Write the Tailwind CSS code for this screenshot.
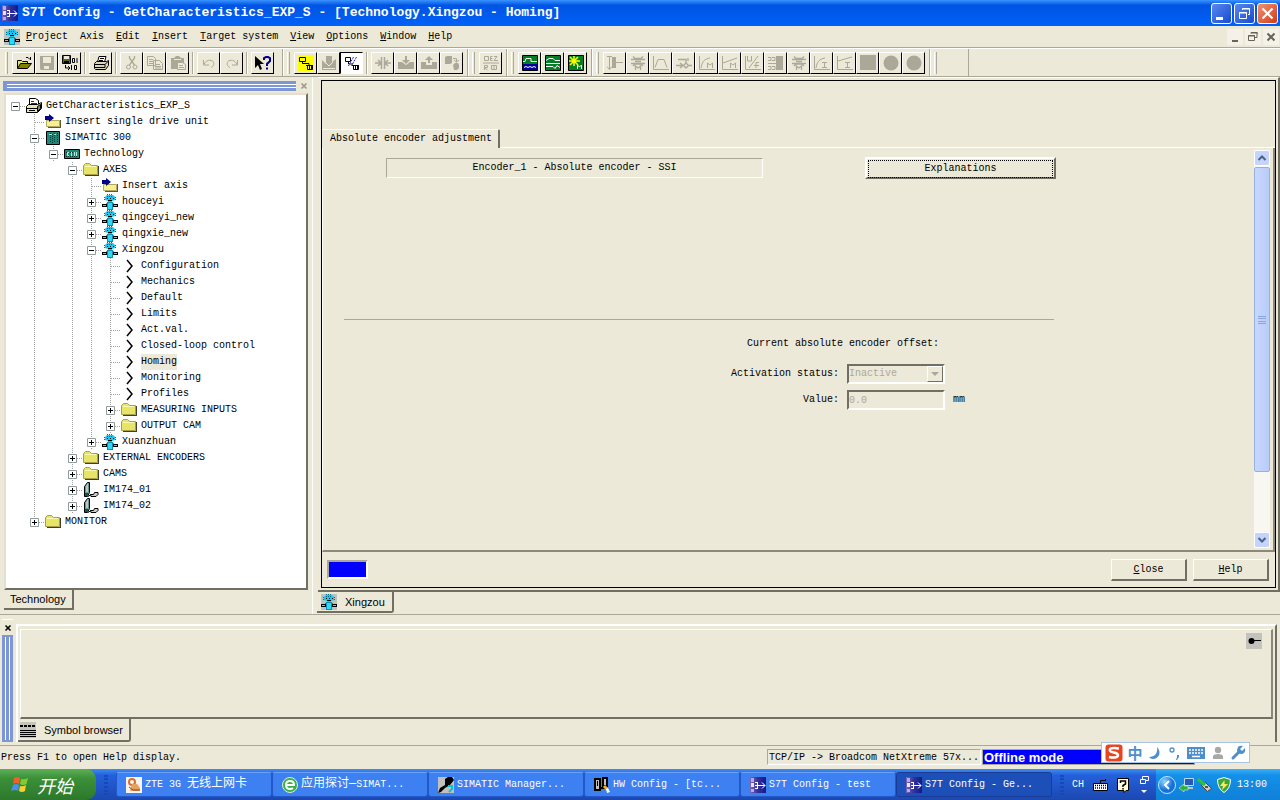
<!DOCTYPE html>
<html lang="en">
<head>
    <meta charset="UTF-8">
    <meta name="viewport" content="width=device-width, initial-scale=1.0">
    <title>S7T Config</title>
    <script src="https://cdn.jsdelivr.net/npm/@tailwindcss/browser@4"></script>
</head>
<body class="h-screen flex flex-col overflow-hidden bg-[#ece9d8] text-black text-[10px] leading-4 font-['Liberation_Mono','Noto_Sans_CJK_SC',monospace]">
    <!-- Icon sprites -->
    <svg class="size-0 shrink-0">
        <defs>
            <linearGradient id="g-app" x1="0" x2="1"><stop offset="0" stop-color="#7a68b8"/><stop offset=".5" stop-color="#33309a"/><stop offset="1" stop-color="#101a88"/></linearGradient>
            <radialGradient id="g-arrow" cx=".35" cy=".3"><stop offset="0" stop-color="#8fd8ff"/><stop offset="1" stop-color="#1470dc"/></radialGradient>
        </defs>
        <symbol id="i-app" viewBox="0 0 16 16"><path fill="url(#g-app)" d="M0 0h16v16H0z"/><path fill="#b9a8e8" d="M1 1h3v4H1zM1 12h3v3H1z"/><path fill="#e8e0ff" d="M1 6h3v4H1z"/><path fill="none" stroke="#fff" d="M5 8.500h10M12 5.500l3 3-3 3M7.500 5v7M5 5.500h2M5 11.500h2"/></symbol>
        <symbol id="i-axis" viewBox="0 0 16 16"><path fill="#18c8f0" d="M5 1h6l2 2v3l-3 1v1H6V7L3 6V3z"/><path fill="none" stroke="#067088" stroke-dasharray="1 1" d="M5 .5h6M2.500 3v3M13.500 3v3M5 2.500h6"/><path fill="#000" d="M5 4h1v1H5zM8 4h1v1H8zM11 4h1v1h-1zM6 6h4v1H6z"/><path fill="#000" d="M0 10h4l2-2v5H0zM16 10h-4l-2-2v5h6z"/><path fill="#d8a8a0" d="M1 11h3v1H1zM12 11h3v1h-3z"/><path fill="#0890b0" d="M5 8h6v8H5z"/><path fill="#30d8f8" d="M6 9h4v6H6z"/></symbol>
        <symbol id="i-folder" viewBox="0 0 16 16"><path fill="#404030" d="M2 14h14V4h-1v9H2z"/><path fill="#e8e468" stroke="#a8a048" d="M.5 12.500V3.500l2-2h4l2 2h6v9z"/><path fill="#f8f8b8" d="M2 4h11v1H2z"/></symbol>
        <symbol id="i-insert" viewBox="0 0 16 16"><path fill="#605830" d="M3 14h13V6h-1v7H3z"/><path fill="#f8f090" stroke="#b0a860" d="M1.500 12.500v-6h13v6z"/><path fill="#000088" d="M0 2h4V0l5 4-5 4V6H0z"/></symbol>
        <symbol id="i-project" viewBox="0 0 16 16"><path fill="#fff" stroke="#000" d="M3.500 8V.500h6l3 2V9z"/><path fill="#2020c0" d="M5 3h3v1H5zM5 5h6v1H5z"/><path fill="#e8e8a8" stroke="#000" d="M.5 8.500l2-2h9l4-2v6l-4 4H.5z"/><path fill="#888" stroke="#000" d="M11.500 8.500l3-2v4l-3 3z"/><path stroke="#000" d="M1 10.500h10M3 12.500h6"/></symbol>
        <symbol id="i-plc" viewBox="0 0 16 16"><path fill="#208878" stroke="#000" d="M1.500 1.500h13v13h-13z"/><path stroke="#003830" stroke-dasharray="1 1" d="M5.500 3v10M7.500 4v9M9.500 3v10M12.500 3v10"/><path stroke="#a0e8d8" d="M4 4.500h3M9 4.500h2"/></symbol>
        <symbol id="i-cpu" viewBox="0 0 16 16"><path fill="#208878" stroke="#000" d="M.5 3.500h15v9H.5z"/><path stroke="#003830" stroke-dasharray="1 1" d="M2 6.500h12M2 10.500h12"/><path fill="none" stroke="#b0f0e0" d="M5 6.500H3.500v3H5M7.500 6v4M10.500 6v4M12.500 6v4"/></symbol>
        <symbol id="i-chev" viewBox="0 0 16 16"><path fill="none" stroke="#000" stroke-width="1.500" d="M6 2l5 6-5 6"/></symbol>
        <symbol id="i-im" viewBox="0 0 16 16"><path fill="#689890" stroke="#000" d="M1.500 14.500V4.500l3-4h2v10l-2 4z"/><path fill="#b8c8c8" d="M3 4l2-3v9H3z"/><path fill="#006050" d="M2 11h3v3H2z"/><path fill="#ccc" stroke="#000" d="M7.500 12.500h3l1-2h3.500v2l-2 2h-5z"/><path stroke="#000" d="M5 14.500l3-2"/></symbol>
        <symbol id="i-symtab" viewBox="0 0 16 16"><path fill="#c8c4b8" d="M0 0h16v16H0z"/><path stroke="#000" stroke-width="2" stroke-dasharray="3 1" d="M0 4h16"/><path stroke="#000" d="M0 8.500h16M0 10.500h16M0 12.500h16M0 14.500h16"/></symbol>

        <!-- Toolbar -->
        <symbol id="t-open" viewBox="0 0 16 16"><path fill="none" stroke="#000" d="M10 2.500h2l2 2M14.500 2v3M1.500 13V5.500h4l1 1h5V8"/><path fill="#e0e060" d="M2 6h3l1 1h5v2H5l-3 4z"/><path fill="#808000" stroke="#000" d="M1.500 13.500l3-5h11l-4 5z"/></symbol>
        <symbol id="t-save" viewBox="0 0 16 16"><path fill="#aca899" fill-rule="evenodd" d="M1 1h14v14H2l-1-1zM4 2v6h8V2zM5 11v3h5v-3z"/></symbol>
        <symbol id="t-save01" viewBox="0 0 16 16"><path fill="#606018" stroke="#000" d="M.5.500h8v8h-8z"/><path fill="#ece9d8" d="M2 1h5v3H2z"/><path fill="#000" d="M2 6h5v2H2z"/><path fill="none" stroke="#000" d="M10.500 3.500h2v4h-2zM15 3v5M3.500 10v3H7M6 11l2 2-2 2M9.500 10v5M12.500 10.500h2v4h-2z"/></symbol>
        <symbol id="t-print" viewBox="0 0 16 16"><path fill="#fff" stroke="#000" d="M4.500 7l1.500-5.500h7L11.500 7"/><path stroke="#000" d="M7 3.500h4M6 5.500h4"/><path fill="#d8d4c0" stroke="#000" d="M1.500 8.500l2-2h10l2-1v5l-3 4h-10l-1-1z"/><path fill="none" stroke="#000" d="M1 9.500h11l3-3M2 12.500h10v-3"/><path fill="#e0d800" d="M8 10.500h2v1H8z"/></symbol>
        <symbol id="t-cut" viewBox="0 0 16 16"><path fill="none" stroke="#aca899" stroke-width="1.300" d="M5.500 1v2l5 7M10.500 1v2l-5 7"/><circle cx="4.500" cy="12" r="2" fill="none" stroke="#aca899"/><circle cx="11" cy="12" r="2" fill="none" stroke="#aca899"/></symbol>
        <symbol id="t-copy" viewBox="0 0 16 16"><path fill="#ece9d8" stroke="#aca899" d="M.5 1.500h6l2 2v7h-8zM6.500 5.500h6l3 3v6h-9z"/><path stroke="#aca899" d="M2 4.500h4M2 6.500h4M2 8.500h4M8 9.500h5M8 11.500h6M8 13h6"/></symbol>
        <symbol id="t-paste" viewBox="0 0 16 16"><path fill="#aca899" d="M1 3h3l2-2h3l2 2h3v11H1z"/><path stroke="#ece9d8" d="M4 4.500h7"/><path fill="#ece9d8" stroke="#aca899" d="M7.500 7.500h5l3 2v5h-8z"/><path stroke="#aca899" d="M9 10.500h4M9 12.500h5"/></symbol>
        <symbol id="t-undo" viewBox="0 0 16 16"><path fill="none" stroke="#aca899" d="M2.500 5v5H8M3 9.500c2-5 7-5 9-3 2 3 0 5-2 6"/></symbol>
        <symbol id="t-redo" viewBox="0 0 16 16"><path fill="none" stroke="#aca899" d="M13.500 5v5H8M13 9.500c-2-5-7-5-9-3-2 3 0 5 2 6"/></symbol>
        <symbol id="t-help" viewBox="0 0 16 16"><path fill="#000" d="M0 1v12l3-3 2 5 2-1-2-5h4z"/><path fill="none" stroke="#000088" stroke-width="2" d="M9 5V3l2-1h2l2 1v3l-3 3v2M12 12.500v2"/></symbol>
        <symbol id="t-net" viewBox="0 0 16 16"><path fill="#ff0" d="M0 0h16v16H0z"/><path fill="none" stroke="#000" d="M1.500 2.500h6v4h-6zM4.500 7v1.500H11V11M9.500 10.500h5v4h-5zM8 10.500h7M11.500 11v4M13.500 11v4"/></symbol>
        <symbol id="t-down" viewBox="0 0 16 16"><path fill="#aca899" d="M1 15V5l4 4V1h6v6l4-3v11z"/><path fill="none" stroke="#ece9d8" d="M4 7l4 4 4-4M2 13.500h12"/></symbol>
        <symbol id="t-netoff" viewBox="0 0 16 16"><path fill="none" stroke="#000" d="M1.500 2.500h5v4h-5zM4.500 7v2H9M9.500 10.500h5v4h-5zM8 10.500h7M11.500 11v4M13.500 11v4"/><path stroke="#2020e0" stroke-dasharray="2 1" d="M9.500 2l-5 9M12.500 2l-5 9"/></symbol>
        <symbol id="t-join" viewBox="0 0 16 16"><path fill="none" stroke="#aca899" stroke-width="1.500" d="M6.500 2v12M9.500 2v12M0 8h6M16 8h-6M3 5l3 3-3 3M13 5l-3 3 3 3"/></symbol>
        <symbol id="t-dl" viewBox="0 0 16 16"><path fill="#aca899" d="M0 7h4l4 3 4-3h4v7H0zM7 1h2v4h3L8 9 4 5h3z"/></symbol>
        <symbol id="t-ul" viewBox="0 0 16 16"><path fill="#aca899" d="M0 7h5v3h6V7h5v7H0zM7 8h2V5h3L8 1 4 5h3z"/></symbol>
        <symbol id="t-mod" viewBox="0 0 16 16"><path fill="#aca899" d="M1 2l2-1h5v7l-2 1H1zM9 10l2-2h3l1 2v3l-2 2h-3z"/><path fill="none" stroke="#aca899" d="M9 3.500h3.500V7M10 5l2.500 2L15 5"/></symbol>
        <symbol id="t-ex" viewBox="0 0 16 16"><path fill="none" stroke="#aca899" d="M1.500 1.500h4v4h-4zM9.500 1.500H7.500v4h2M7.500 3.500h2M11 1.500h3l-3 4h4M0 8h16M1.500 15v-4.500h3v2h-3l3 2.500M8.500 10.500h5v4h-5zM11 10v5"/></symbol>
        <symbol id="t-tr1" viewBox="0 0 16 16"><path fill="#008020" stroke="#000" d="M.5.500h15v15H.5z"/><path fill="#0000a0" d="M1 9h14v6H1z"/><path fill="none" stroke="#fff" d="M1 6.500h2l1-3h5v3h6M2 12.500l2-1 2 1 2-1 2 1 2-1 2 1"/></symbol>
        <symbol id="t-tr2" viewBox="0 0 16 16"><path fill="#008020" stroke="#000" d="M.5.500h15v15H.5z"/><path fill="none" stroke="#fff" d="M1 5.500l3-2h4l2 2h5M1 8.500h14M1 11.500h7l2 2 2-3 3 2"/></symbol>
        <symbol id="t-tr3" viewBox="0 0 16 16"><path fill="#008020" stroke="#000" d="M.5.500h15v15H.5z"/><path stroke="#ff0" stroke-width="1.500" d="M6 1v10M1 6h11M2 2l8 8M10 2l-8 8"/><path fill="none" stroke="#fff" d="M9.500 14v-4l2 2 2-2v4"/></symbol>
        <symbol id="g-1" viewBox="0 0 16 16"><path fill="#aca899" d="M5 2h4v11H5z"/><path fill="none" stroke="#aca899" d="M9 7.500h7M0 1.500h5M2.500 2v12M0 11.500l2.500 3 2.500-3"/></symbol>
        <symbol id="g-2" viewBox="0 0 16 16"><path fill="none" stroke="#aca899" stroke-width="1.300" d="M1 4.500h14M1 8.500h14M3 1.500l2 2h6l2-2M3 11l2-2h6l2 2M5.500 15v-4l2.500 2 2.500-2v4M5 6.500h6"/></symbol>
        <symbol id="g-3" viewBox="0 0 16 16"><path fill="none" stroke="#aca899" d="M.5 1v13.500H16M2 12.500l3-8h6l3 8"/></symbol>
        <symbol id="g-4" viewBox="0 0 16 16"><path fill="none" stroke="#aca899" stroke-width="1.300" d="M2 4.500h8V8M0 10.500h7M4 8l3 2.500L4 13M12 10.500h4M10 8l2.500 2.500L10 13l-2.500-2.500zM12 6V3"/></symbol>
        <symbol id="g-5" viewBox="0 0 16 16"><path fill="none" stroke="#aca899" d="M.5 1v13.500H16M2 13c1-6 3-9 9-10M8.500 13V8l2.500 2 2.500-2v5"/></symbol>
        <symbol id="g-6" viewBox="0 0 16 16"><path fill="none" stroke="#aca899" d="M.5 1v13.500H16M1 8l14-5M8.500 13V8l2.500 2 2.500-2v5"/></symbol>
        <symbol id="g-7" viewBox="0 0 16 16"><path fill="none" stroke="#aca899" d="M.5 1v13.500H16M2.500 1v5h4V1M4 13L13 1M14 7.500h-3V13M9 10.500h5"/></symbol>
        <symbol id="g-8" viewBox="0 0 16 16"><path fill="#aca899" d="M8 1h7v14H8z"/><path fill="none" stroke="#aca899" d="M0 2.500h3v3H0M4 2.500h3v3H4M0 8.500h8M0 11.500h3v3H0M4 11.500h3v3H4"/></symbol>
        <symbol id="g-9" viewBox="0 0 16 16"><path fill="none" stroke="#aca899" d="M.5 1v13.500H16M2 13c1-6 3-9 9-10M8 7.500h5M10.500 8v5M8 12.500h5"/></symbol>
        <symbol id="g-10" viewBox="0 0 16 16"><path fill="none" stroke="#aca899" d="M.5 1v13.500H16M1 6l14-4M8 7.500h5M10.500 8v5M8 12.500h5"/></symbol>
        <symbol id="g-sq" viewBox="0 0 16 16"><path fill="#aca899" d="M0 0h16v15H0z"/></symbol>
        <symbol id="g-ci" viewBox="0 0 16 16"><circle cx="8" cy="8" r="7.500" fill="#aca899"/></symbol>
    </svg>

    <!-- Title bar -->
    <header class="h-[26px] shrink-0 flex items-center gap-1 pl-0.5 pr-0.5 bg-linear-to-b from-[#3a93ff] via-[#0054e3] via-20% to-[#0062f8] text-white">
        <svg class="size-4"><use href="#i-app"/></svg>
        <h1 class="flex-1 text-[13px] font-bold truncate">S7T Config - GetCharacteristics_EXP_S - [Technology.Xingzou - Homing]</h1>
        <div class="flex gap-0.5">
            <button aria-label="Minimize" class="size-[21px] rounded-[3px] border border-white bg-linear-to-br from-[#5a88ee] to-[#1848d0]"><svg viewBox="0 0 19 19"><path fill="#fff" d="M4 13h7v3H4z"/></svg></button>
            <button aria-label="Restore" class="size-[21px] rounded-[3px] border border-white bg-linear-to-br from-[#5a88ee] to-[#1848d0]"><svg viewBox="0 0 19 19" fill="none" stroke="#fff"><path d="M4.500 8.500h7v6h-7zM4 9h8M7.500 6V4.500h7v6H13M7 5h8"/></svg></button>
            <button aria-label="Close window" class="size-[21px] rounded-[3px] border border-white bg-linear-to-br from-[#f09070] to-[#d03810]"><svg viewBox="0 0 19 19"><path stroke="#fff" stroke-width="2.200" d="M4.500 4.500l10 10M14.500 4.500l-10 10"/></svg></button>
        </div>
    </header>

    <!-- Menu bar -->
    <nav class="h-[22px] shrink-0 flex items-center gap-3 pl-1 border-b border-[#aca899]">
        <svg class="size-4 -mr-1.5 bg-[#b8c4c0]"><use href="#i-axis"/></svg>
        <a href="#"><u>P</u>roject</a>
        <a href="#">Axis</a>
        <a href="#"><u>E</u>dit</a>
        <a href="#"><u>I</u>nsert</a>
        <a href="#"><u>T</u>arget system</a>
        <a href="#"><u>V</u>iew</a>
        <a href="#"><u>O</u>ptions</a>
        <a href="#"><u>W</u>indow</a>
        <a href="#"><u>H</u>elp</a>
        <div class="ml-auto flex gap-0.5 pr-px">
            <button aria-label="Minimize child" class="size-4 bg-[#f4f2e8]"><svg viewBox="0 0 16 16"><path fill="#666456" d="M5 11h6v2H5z"/></svg></button>
            <button aria-label="Restore child" class="size-4 bg-[#f4f2e8]"><svg viewBox="0 0 16 16" fill="none" stroke="#666456"><path d="M3.500 6.500h6v5h-6zM3 7h7M6 4.500V3.500h6v5h-2M6 4h7"/></svg></button>
            <button aria-label="Close child" class="size-4 bg-[#f4f2e8]"><svg viewBox="0 0 16 16"><path stroke="#666456" stroke-width="2" d="M4.500 4.500l7 7M11.500 4.500l-7 7"/></svg></button>
        </div>
    </nav>

    <!-- Toolbar -->
    <div id="toolbar" class="h-7 shrink-0 flex items-center pl-[5px] border-t border-white"></div>

    <!-- Main area -->
    <main class="flex-1 min-h-0 flex border-t border-[#aca899]">
        <aside class="w-[313px] shrink-0 flex flex-col pl-[3px] pt-1 pb-1 pr-1 border-r border-white">
            <div class="flex items-center gap-1">
                <div class="flex-1 h-[10px] bg-[#7c96d8] flex items-center pl-1"><div class="flex-1 h-1 border-y border-white"></div></div>
                <button aria-label="Close tree" class="size-2"><svg viewBox="0 0 8 8"><path stroke="#9c988a" stroke-width="1.600" d="M1.500 1.500l5 5M6.500 1.500l-5 5"/></svg></button>
            </div>
            <div class="flex-1 min-h-0 mt-0.5 ml-px pt-[3px] bg-white border-2 border-[#e4e0d0] border-r-[#716f64] border-b-[#716f64]">
                <ul id="tree"></ul>
            </div>
            <div class="flex">
                <button class="h-5 px-[6px] ml-px bg-[#ece9d8] border-r-2 border-b-2 border-[#716f64] font-['Liberation_Sans',sans-serif] text-[11px]">Technology</button>
            </div>
        </aside>

        <section class="flex-1 min-w-0 flex flex-col pl-1">
            <div class="flex-1 min-h-0 flex flex-col ml-px pl-[3px] pt-0.5 pr-0.5 pb-0.5 border-t border-white border-r-2 border-b-2 border-r-[#716f64] border-b-[#716f64]">
                <div class="flex-1 min-h-0 flex flex-col border border-black">
                    <div class="flex pt-12">
                        <button class="h-[19px] pl-2 pr-[6px] border-t border-t-white border-r-2 border-r-[#716f64] rounded-tr-[2px]">Absolute encoder adjustment</button>
                        <div class="flex-1 border-b border-white"></div>
                    </div>
                    <div class="flex-1 min-h-0 flex border-l border-l-white border-r-2 border-r-[#8c897c] border-b-2 border-b-[#8c897c]">
                        <div class="flex-1 pl-[21px]">
                            <div class="w-[712px] pt-[9px] flex items-center">
                                <div class="ml-[42px] w-[377px] h-5 text-center leading-[18px] border border-[#aca899] border-r-white border-b-white">Encoder_1 - Absolute encoder - SSI</div>
                                <button class="ml-auto w-[191px] h-[22px] p-px border-2 border-t-white border-l-white border-r-[#716f64] border-b-[#716f64]"><span class="block border border-dotted border-black">Explanations</span></button>
                            </div>
                            <hr class="mt-[140px] w-[710px] border-t-[#aca899]">
                            <h2 class="mt-4 pl-[403px]">Current absolute encoder offset:</h2>
                            <div class="mt-3 grid grid-cols-[495px_98px_auto] items-center gap-x-2 gap-y-[6px]">
                                <label for="status" class="text-right">Activation status:</label>
                                <div class="relative">
                                    <select id="status" disabled class="block w-full h-[20px] appearance-none bg-[#ece9d8] text-[#aca899] opacity-100 border-2 border-[#716f64] border-r-white border-b-white"><option>Inactive</option></select>
                                    <svg class="absolute right-0.5 top-0.5 w-4 h-4 bg-[#ece9d8] border border-white border-r-[#716f64] border-b-[#716f64] pointer-events-none" viewBox="0 0 14 14"><path fill="#aca899" d="M3 5h8L7 9z"/></svg>
                                </div>
                                <span></span>
                                <label for="value" class="text-right">Value:</label>
                                <input id="value" type="text" disabled value="0.0" class="block w-full h-[20px] bg-[#ece9d8] text-[#aca899] border-2 border-[#716f64] border-r-white border-b-white">
                                <span>mm</span>
                            </div>
                        </div>
                        <!-- Scrollbar -->
                        <div class="w-4 mr-[3px] my-0.5 flex flex-col bg-[#f8f7f2]">
                            <button aria-label="Scroll up" class="h-4 rounded-[2px] border border-white bg-[#c4d4fc]"><svg viewBox="0 0 14 14"><path fill="none" stroke="#4d6185" stroke-width="2" d="M3.500 9L7 5.500 10.500 9"/></svg></button>
                            <div class="h-[305px] mt-px rounded-[2px] border border-[#98b0e0] bg-linear-to-r from-[#c8d8fe] to-[#b8ccfa] flex items-center justify-center"><span class="w-2 h-2 border-y border-[#8ca4dc] flex items-center"><span class="w-2 h-1 border-y border-[#8ca4dc]"></span></span></div>
                            <button aria-label="Scroll down" class="h-4 mt-auto rounded-[2px] border border-white bg-[#c4d4fc]"><svg viewBox="0 0 14 14"><path fill="none" stroke="#4d6185" stroke-width="2" d="M3.500 5L7 8.500 10.500 5"/></svg></button>
                        </div>
                    </div>
                    <div class="h-[35px] flex items-center gap-[6px] pl-[5px] pr-[6px]">
                        <div class="mr-auto w-[41px] h-[19px] bg-[#0000ff] border-2 border-[#aca899] border-r-white border-b-white"></div>
                        <button class="w-[76px] h-[22px] pt-0.5 border border-white border-r-2 border-b-2 border-r-[#716f64] border-b-[#716f64]"><u>C</u>lose</button>
                        <button class="w-[76px] h-[22px] pt-0.5 border border-white border-r-2 border-b-2 border-r-[#716f64] border-b-[#716f64]"><u>H</u>elp</button>
                    </div>
                </div>
            </div>
            <div class="flex pb-px">
                <button class="h-[21px] pl-1 pr-[7px] flex items-center gap-2 border-r-2 border-b-2 border-[#716f64] rounded-br-[3px] font-['Liberation_Sans',sans-serif] text-[11px]"><svg class="size-4 bg-[#b8c4c0]"><use href="#i-axis"/></svg>Xingzou</button>
            </div>
        </section>
    </main>

    <!-- Symbol browser -->
    <section class="h-[131px] shrink-0 flex gap-[3px] pl-0.5 pt-1 pr-[3px] pb-[3px] border-t border-[#aca899]">
        <div class="w-[11px] pt-1 flex flex-col gap-[3px] border-t border-white">
            <button aria-label="Close symbol browser" class="h-2 flex items-center justify-center"><svg class="size-2" viewBox="0 0 8 8"><path stroke="#000" stroke-width="1.500" d="M1.500 1.500l5 5M6.500 1.500l-5 5"/></svg></button>
            <div class="flex-1 bg-[#7c96d8] flex justify-center pt-0.5 pb-0.5"><div class="w-[5px] border-x border-white"></div></div>
        </div>
        <div class="flex-1 flex flex-col mt-[5px] border-l-2 border-t-2 border-white border-r-2 border-r-[#716f64]">
            <div class="flex-1 flex justify-end ml-0.5 mr-0.5 mt-[3px] pt-[3px] pr-[9px] border border-white border-r-2 border-b-2 border-r-[#8c897c] border-b-[#716f64]">
                <svg class="size-4 bg-[#c4c2bc]" viewBox="0 0 16 16"><circle cx="5.500" cy="8" r="3"/><path stroke="#000" d="M6 7.500h9"/></svg>
            </div>
            <div class="flex">
                <button class="h-[23px] pl-0.5 pr-[6px] flex items-center gap-2 border-r-2 border-b-2 border-[#716f64] rounded-br-[3px] font-['Liberation_Sans',sans-serif] text-[11px]"><svg class="size-4"><use href="#i-symtab"/></svg>Symbol browser</button>
            </div>
        </div>
    </section>

    <!-- Status bar -->
    <footer class="relative h-6 shrink-0 flex pt-[3px] pb-[4px] pl-px pr-[85px] border-t border-[#aca899]">
        <p class="flex-1 pt-px">Press F1 to open Help display.</p>
        <p class="w-[214px] pl-px border border-[#aca899] border-r-white border-b-white whitespace-nowrap">TCP/IP -&gt; Broadcom NetXtreme 57x...</p>
        <p class="w-[213px] ml-px pl-px bg-[#0000ff] border border-[#aca899] text-white font-['Liberation_Sans',sans-serif] font-bold text-[13px] leading-4">Offline mode</p>
        <!-- Input method bar -->
        <div class="absolute right-[30px] -top-1 w-[149px] h-[21px] flex items-center justify-around px-px bg-white border border-[#a8c4e4] text-[#4d8fcc] text-[15px] font-['Noto_Sans_CJK_SC',sans-serif]">
            <svg class="size-[18px]" viewBox="0 0 18 18"><rect width="17" height="17" x=".5" y=".5" fill="#e84420" rx="3"/><path fill="none" stroke="#fff" stroke-width="2.500" d="M14 4.500C6 3 4 5 5 7c1 2 8 1 8 4 0 3-5 3-9 2"/></svg>
            <span class="font-bold">中</span>
            <svg class="size-4" viewBox="0 0 16 16"><path fill="#4d8fcc" d="M10 2c5 5 2 12-4 12-2 0-3-1-4-2 6 0 9-4 8-10z"/></svg>
            <svg class="size-4" viewBox="0 0 16 16"><circle cx="5" cy="5" r="2" fill="none" stroke="#4d8fcc" stroke-width="1.300"/><path fill="#4d8fcc" d="M10 10h2v2l-2 3H9l1-3z"/></svg>
            <svg class="w-[18px] h-4" viewBox="0 0 18 16"><path fill="#4d8fcc" d="M0 2h18v12H0z"/><path stroke="#fff" stroke-width="1.500" stroke-dasharray="2 1" d="M2 5h14M2 8h14"/><path stroke="#fff" stroke-width="1.500" d="M5 11.500h8"/></svg>
            <svg class="size-4" viewBox="0 0 16 16" fill="#aaa8a4"><circle cx="8" cy="5" r="3.200"/><path d="M3 14V11q1-2 5-2t5 2v3z"/></svg>
            <svg class="size-4" viewBox="0 0 16 16"><path stroke="#4d8fcc" stroke-width="3" stroke-linecap="round" d="M3 13l6-6"/><path fill="#4d8fcc" d="M8 2q2-2 5-1l-3 3 2 2 3-3q1 5-3 6-5 0-5-4z"/></svg>
        </div>
    </footer>

    <!-- Taskbar -->
    <div class="h-[31px] shrink-0 flex items-center bg-linear-to-b from-[#3f8cf0] via-[#2460dc] via-20% to-[#1c48b0] text-white">
        <button class="w-24 h-full pl-[11px] flex items-center gap-2 rounded-r-[10px] bg-linear-to-b from-[#5cb058] via-[#3c9038] via-30% to-[#2c782c] text-[18px] italic font-['Noto_Sans_CJK_SC',sans-serif]">
            <svg class="w-[18px] h-[18px]" viewBox="0 0 18 18"><path fill="#f06028" d="M3 2q3-2 6 0L8 8Q5 6 2 8z"/><path fill="#80cc30" d="M10 3q3 1 7-1l-1.500 6Q12 10 9 8z"/><path fill="#4890f0" d="M2 9q3-2 6 0l-1 6Q4 13 0 15z"/><path fill="#f8d030" d="M9 10q3 1 6-1l-1 6q-3 2-6 0z"/></svg>开始</button>
        <div class="w-5 flex justify-center"><div class="w-1 h-5 border-x-2 border-dotted border-[#1848b8]"></div></div>
        <div class="flex-1 min-w-0 flex whitespace-nowrap">
            <button class="flex-1 min-w-0 h-[25px] pl-[9px] flex items-center gap-[3px] rounded-[3px] border border-[#2458c8] border-t-[#6ca0fa] bg-[#3c80f2]"><svg class="size-4 shrink-0" viewBox="0 0 16 16"><path fill="#f8f4f0" d="M0 0h16v16H0z"/><circle cx="6" cy="5" r="3" fill="none" stroke="#d87030" stroke-width="2"/><path fill="#e8a060" d="M6 7h5l3 4v3H4z"/><path fill="none" stroke="#904018" d="M3 10l4 3h7"/></svg><span>ZTE 3G <span class="text-[12px]">无线上网卡</span></span></button>
            <button class="flex-1 min-w-0 h-[25px] pl-[9px] flex items-center gap-[3px] rounded-[3px] border border-[#2458c8] border-t-[#6ca0fa] bg-[#3c80f2]"><svg class="size-4 shrink-0" viewBox="0 0 16 16"><circle cx="8" cy="8" r="7.500" fill="#38b048" stroke="#d8f0d8"/><path fill="none" stroke="#fff" stroke-width="2" d="M4 8h8q0-4-4-4T4 8t4 4q2 0 3-1"/></svg><span><span class="text-[12px]">应用探讨—</span>SIMAT...</span></button>
            <button class="flex-1 min-w-0 h-[25px] pl-[9px] flex items-center gap-[3px] rounded-[3px] border border-[#2458c8] border-t-[#6ca0fa] bg-[#3c80f2]"><svg class="size-4 shrink-0" viewBox="0 0 16 16"><path fill="#c0c0c0" d="M0 0h16v16H0z"/><path d="M7 2l3-2h4l2 3-4 5-5 3-4 4-3 1 2-5 5-3z"/><path fill="none" stroke="#00c8c8" stroke-width="2" d="M10 9h4v3l-3 3"/></svg>SIMATIC Manager...</button>
            <button class="flex-1 min-w-0 h-[25px] pl-[9px] flex items-center gap-[3px] rounded-[3px] border border-[#2458c8] border-t-[#6ca0fa] bg-[#3c80f2]"><svg class="size-4 shrink-0" viewBox="0 0 16 16"><path fill="#c0c0c0" stroke="#000" stroke-width="2" d="M1 2h5v11H1zM9 1h4v8H9z"/><path d="M3 4h1v5H3z"/><path stroke="#000" stroke-width="2" d="M6 11h5"/><path stroke="#f0b020" stroke-width="3" d="M10 9l3 3"/><path fill="#fff" d="M12 12l2-1 2 4-3 1z"/></svg>HW Config - [tc...</button>
            <button class="flex-1 min-w-0 h-[25px] pl-[9px] flex items-center gap-[3px] rounded-[3px] border border-[#2458c8] border-t-[#6ca0fa] bg-[#3c80f2]"><svg class="size-4 shrink-0"><use href="#i-app"/></svg>S7T Config - test</button>
            <button class="flex-1 min-w-0 h-[25px] pl-[9px] flex items-center gap-[3px] rounded-[3px] border border-[#183c98] bg-[#1c50b8]"><svg class="size-4 shrink-0"><use href="#i-app"/></svg>S7T Config - Ge...</button>
        </div>
        <div class="w-5 flex justify-center"><div class="w-1 h-5 border-x-2 border-dotted border-[#1848b8]"></div></div>
        <div class="w-[84px] flex items-center gap-[9px]">
            <span>CH</span>
            <svg class="w-[15px] h-4" viewBox="0 0 15 16"><path fill="#fff" stroke="#000" d="M.5 6.500h14v7H.5z"/><path fill="none" stroke="#000" d="M7.500 6V3.500h5V2"/><path stroke="#000" stroke-width="1.500" stroke-dasharray="1 1" d="M2 8.500h12M2 11h12"/></svg>
            <svg class="w-3 h-4" viewBox="0 0 12 16"><path fill="#ffffd8" stroke="#000" d="M.5 1.500h11v12H9l-2 2v-2H.500z"/><path fill="none" stroke="#000" stroke-width="1.500" d="M3.500 6V4h5v3L6 8.500V10M6 11v1.500"/></svg>
            <svg class="w-3 h-5" viewBox="0 0 12 20"><path fill="none" stroke="#fff" d="M2.500 4.500h5v4h-5zM4.500 4V1.500h6v4H8"/><path fill="#fff" d="M3 15h6l-3 3z"/></svg>
        </div>
        <!-- Notification area -->
        <div class="w-[124px] h-full flex items-center gap-[3px] pl-0.5 bg-linear-to-b from-[#38b0f8] via-[#1490e8] via-20% to-[#1080d8]">
            <svg class="size-[18px]" viewBox="0 0 18 18"><circle cx="9" cy="9" r="8.500" fill="url(#g-arrow)" stroke="#c0e4ff"/><path fill="none" stroke="#fff" stroke-width="2" d="M11 5L7 9l4 4"/></svg>
            <svg class="size-4" viewBox="0 0 16 16"><path fill="#2858b8" stroke="#b8d8f0" d="M5.500 1.500h9v7h-9z"/><path fill="#b8c8c8" d="M7 10h7v2H7z"/><path fill="#30b030" stroke="#d0f0d0" stroke-width=".6" d="M0 11l5-4v2h4v4H5v2z"/></svg>
            <svg class="size-4 -ml-px" viewBox="0 0 16 16"><path fill="#d0d0c8" stroke="#444" d="M4.500 8.500l4-3 6 6-4 3z"/><path stroke="#30c030" stroke-width="3" d="M1 2l7 6"/><path fill="#555" d="M8 9h3v2H8z"/></svg>
            <svg class="size-4" viewBox="0 0 16 16"><path fill="#38a838" stroke="#fff" d="M8 .500l6.500 2q0 9-6.500 13Q1.500 11.500 1.500 2.500z"/><path fill="#ffe860" d="M8.500 3L4 9h3l-1 4 6-6H8.500z"/></svg>
            <time class="ml-0.5">13:00</time>
        </div>
    </div>

    <script>
        // Toolbar: '|' is a separator, '||' starts a new band, a trailing '*' marks the pressed button
        const toolbar = document.getElementById('toolbar');
        const tools = [
            't-open Open', 't-save Save', 't-save01 Save and compile', '|', 't-print Print', '|',
            't-cut Cut', 't-copy Copy', 't-paste Paste', '|', 't-undo Undo', 't-redo Redo', '|', 't-help Context help', ' ', '||',
            't-net Online', 't-down Load', 't-netoff Offline*', '|',
            't-join Compare', 't-dl Download', 't-ul Upload', 't-mod Module', '||', 't-ex Express', '||',
            't-tr1 Trace', 't-tr2 Record', 't-tr3 Autotune', '||',
            'g-1 Axis data', 'g-2 Motor', 'g-3 Ramp', 'g-4 Control', 'g-5 Curve', 'g-6 Line', 'g-7 U/f', 'g-8 Terminals',
            'g-2 Motor 2', 'g-9 Current curve', 'g-10 Current line', 'g-sq Stop', 'g-ci Signal 1', 'g-ci Signal 2', '||'
        ];
        const grip = '<span class="w-[3px] h-[22px] border-l border-l-white border-r border-r-[#aca899] mr-1"></span>';

        toolbar.innerHTML = grip + tools.map(function(tool) {
            if (tool === ' ') {
                return '<span class="w-1"></span>';
            }
            if (tool === '|') {
                return '<span class="w-2 h-[22px] flex justify-center"><span class="w-0.5 border-l border-l-[#aca899] border-r border-r-white"></span></span>';
            }
            if (tool === '||') {
                return `<span class="w-[9px] h-7 flex justify-center"><span class="w-0.5 border-l border-l-[#aca899] border-r border-r-white"></span></span>${grip}`;
            }
            const pressed = tool.endsWith('*');
            const id = tool.split(' ')[0];
            const name = tool.slice(id.length + 1).replace('*', '');
            const look = pressed ? 'bg-white border-t-black border-l-black border-r-white border-b-white' : 'border-t-white border-l-white border-r-black border-b-black';
            return `<button aria-label="${name}" class="w-[23px] h-[22px] flex items-center justify-center border ${look}"><svg class="size-4"><use href="#${id}"/></svg></button>`;
        }).join('') + '<span class="w-[28px] h-7 border-r border-[#aca899]"></span>';

        // Tree rows: [guides, toggle, icon, label]
        // guides: '|' vertical line, ' ' blank. toggle: + or -, T for a branch without a box
        const rows = [
            ['', '-', 'project', 'GetCharacteristics_EXP_S'],
            [' ', 'T', 'insert', 'Insert single drive unit'],
            [' ', '-', 'plc', 'SIMATIC 300'],
            [' |', '-', 'cpu', 'Technology'],
            [' | ', '-', 'folder', 'AXES'],
            [' | |', 'T', 'insert', 'Insert axis'],
            [' | |', '+', 'axis', 'houceyi'],
            [' | |', '+', 'axis', 'qingceyi_new'],
            [' | |', '+', 'axis', 'qingxie_new'],
            [' | |', '-', 'axis', 'Xingzou'],
            [' | ||', 'T', 'chev', 'Configuration'],
            [' | ||', 'T', 'chev', 'Mechanics'],
            [' | ||', 'T', 'chev', 'Default'],
            [' | ||', 'T', 'chev', 'Limits'],
            [' | ||', 'T', 'chev', 'Act.val.'],
            [' | ||', 'T', 'chev', 'Closed-loop control'],
            [' | ||', 'T', 'chev', 'Homing'],
            [' | ||', 'T', 'chev', 'Monitoring'],
            [' | ||', 'T', 'chev', 'Profiles'],
            [' | ||', '+', 'folder', 'MEASURING INPUTS'],
            [' | ||', '+', 'folder', 'OUTPUT CAM'],
            [' | |', '+', 'axis', 'Xuanzhuan'],
            [' | ', '+', 'folder', 'EXTERNAL ENCODERS'],
            [' | ', '+', 'folder', 'CAMS'],
            [' | ', '+', 'im', 'IM174_01'],
            [' | ', '+', 'im', 'IM174_02'],
            [' ', '+', 'folder', 'MONITOR']
        ];
        const vline = '<path stroke="#a0a0a0" stroke-dasharray="1 1" d="M9.500 0v16"/>';

        document.getElementById('tree').innerHTML = rows.map(function([guides, toggle, icon, label], i) {
            const cells = [...guides].map(g => `<svg class="w-[19px] h-4 shrink-0">${g === '|' ? vline : ''}</svg>`).join('');
            let mark = '<path stroke="#a0a0a0" stroke-dasharray="1 1" d="M10 8.500h9"/>';
            if (i > 0) mark += i === rows.length - 1 ? '<path stroke="#a0a0a0" stroke-dasharray="1 1" d="M9.500 0v8"/>' : vline;
            if (toggle !== 'T') {
                mark += '<path fill="#fff" stroke="#919b9c" d="M5.500 4.500h8v8h-8z"/><path stroke="#000" d="M7 8.500h5"/>';
                if (toggle === '+') mark += '<path stroke="#000" d="M9.500 6v5"/>';
            }
            const selected = label === 'Homing' ? 'bg-[#ece9d8]' : '';
            return `<li class="h-4 flex items-center">${cells}<svg class="w-5 h-4 shrink-0">${mark}</svg><svg class="size-4 shrink-0 mr-1"><use href="#i-${icon}"/></svg><span class="${selected}">${label}</span></li>`;
        }).join('');
    </script>
</body>
</html>
